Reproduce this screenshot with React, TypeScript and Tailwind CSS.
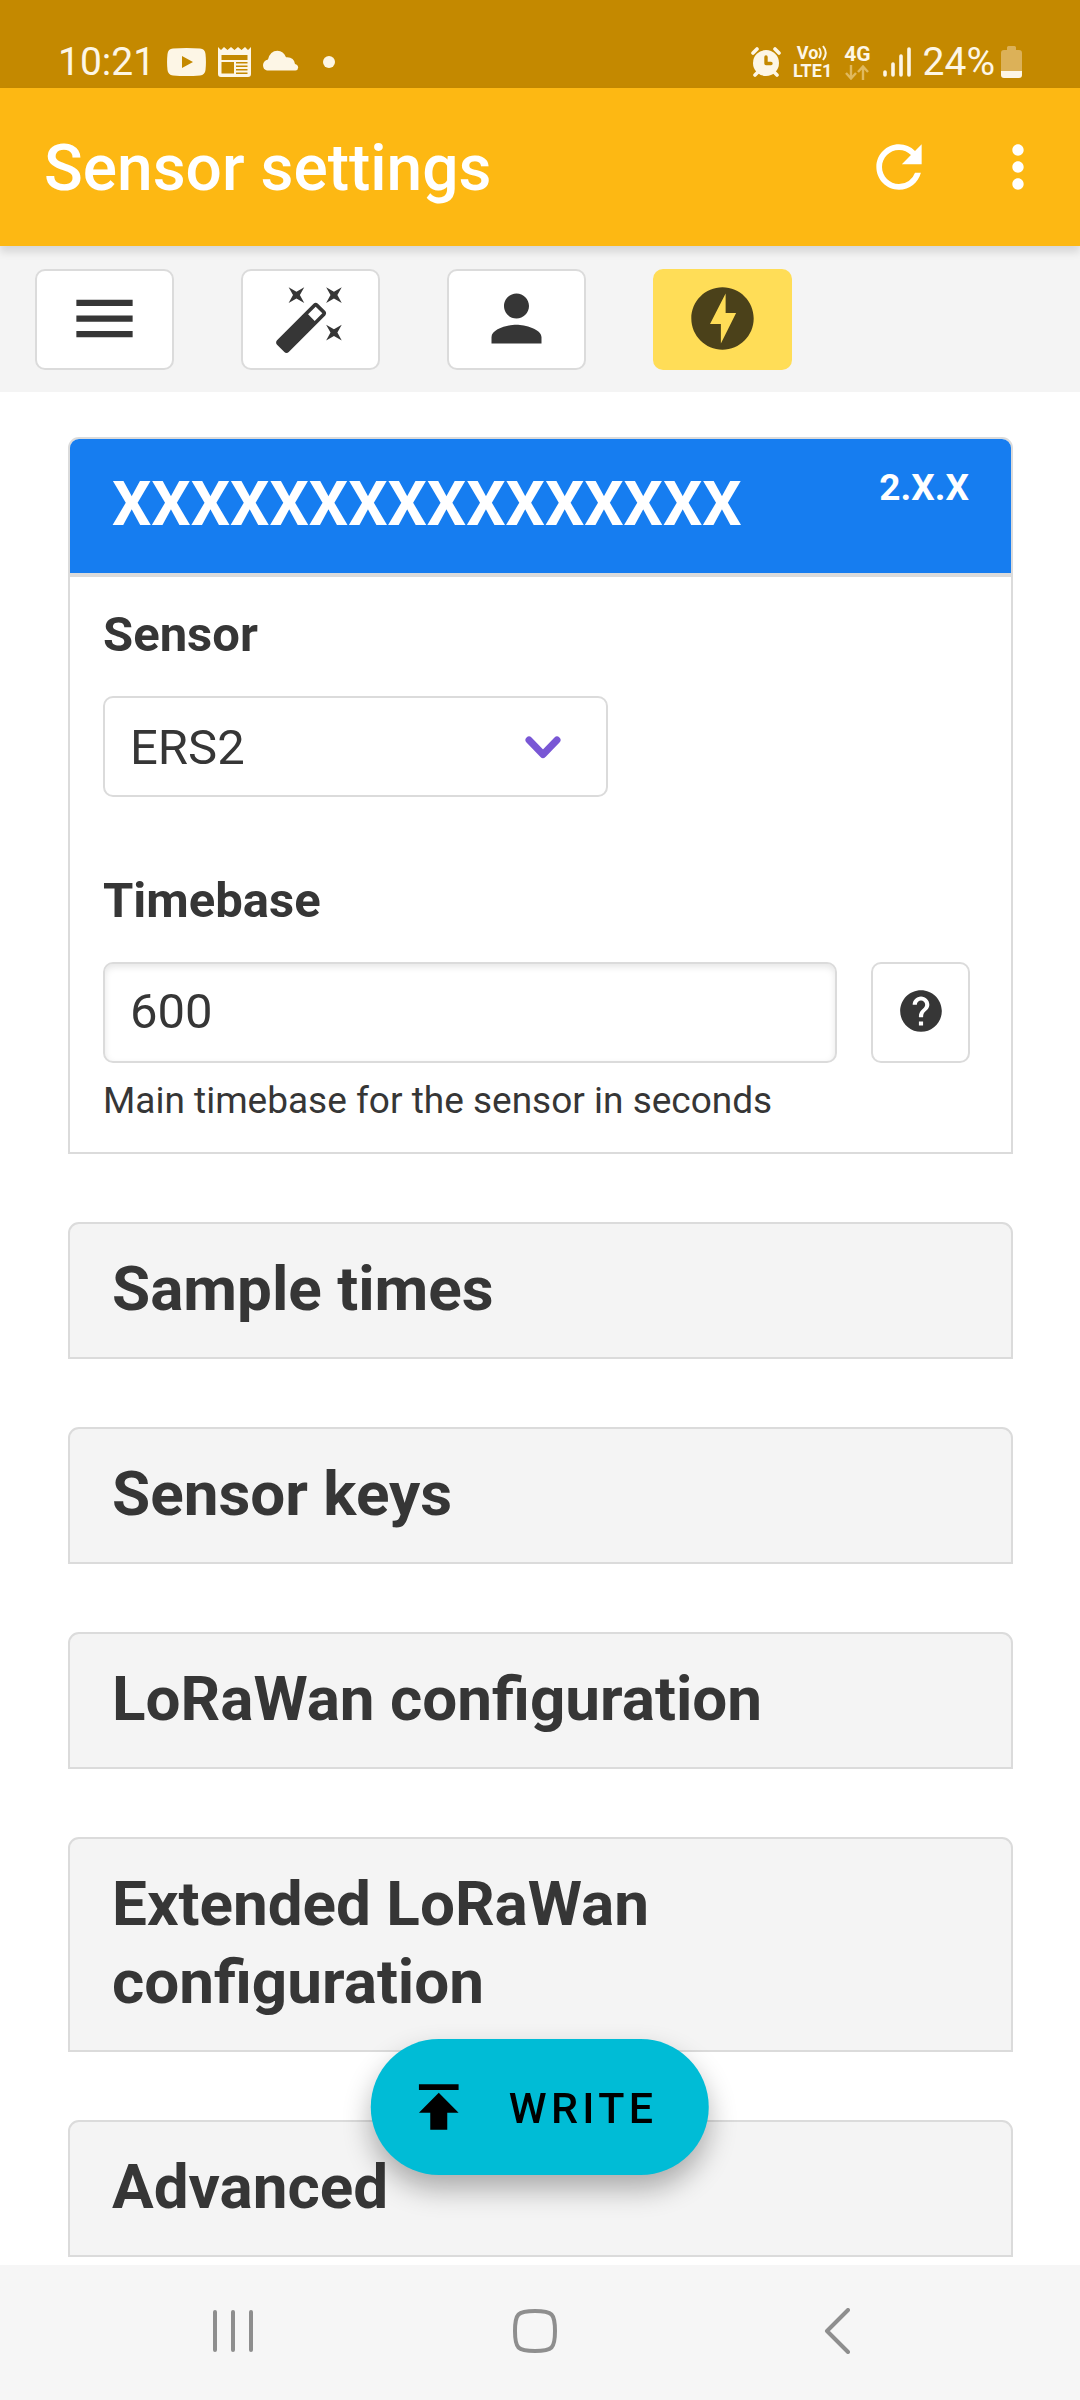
import { useState } from 'react';
import { MdHelp, MdMenu, MdMoreVert, MdOfflineBolt, MdPerson, MdPublish, MdRefresh } from 'react-icons/md';

const sections = [
  "Sample times",
  "Sensor keys",
  "LoRaWan configuration",
  "Extended LoRaWan configuration",
  "Advanced"
];

function WandIcon() {
  return (
    <svg viewBox="0 0 24 24" className="size-[75px]" fill="currentColor" aria-hidden="true">
      <path d="M7.5,5.6L5,7L6.4,4.5L5,2L7.5,3.4L10,2L8.6,4.5L10,7L7.5,5.6M19.5,15.4L22,14L20.6,16.5L22,19L19.5,17.6L17,19L18.4,16.5L17,14L19.5,15.4M22,2L20.6,4.5L22,7L19.5,5.6L17,7L18.4,4.5L17,2L19.5,3.4L22,2M13.34,12.78L15.78,10.34L13.66,8.22L11.22,10.66L13.34,12.78M14.37,7.29L16.71,9.63C17.1,10 17.1,10.65 16.71,11.04L5.04,22.71C4.65,23.1 4,23.1 3.63,22.71L1.29,20.37C0.9,20 0.9,19.35 1.29,18.96L12.96,7.29C13.35,6.9 14,6.9 14.37,7.29Z" />
    </svg>
  );
}

const tools = [
  { label: "Menu", icon: <MdMenu className="size-[75px]" />, active: false },
  { label: "Templates", icon: <WandIcon />, active: false },
  { label: "User", icon: <MdPerson className="size-[75px]" />, active: false },
  { label: "Quick write", icon: <MdOfflineBolt className="size-[75px]" />, active: true }
];

function StatusBar() {
  return (
    <div className="h-[88px] bg-[#c48900] text-[#fdf6e6] flex items-end justify-between px-[58px] pb-2">
      <div className="flex items-center">
        <span className="text-[39px] leading-[36px]">10:21</span>
        <svg viewBox="0 0 39 28" className="w-[39px] h-[28px] ml-3" aria-hidden="true">
          <path fill="currentColor" fillRule="evenodd" d="M6 .6Q19.5-.6 33 .6Q38 1 38.5 6Q39.4 14 38.5 22Q38 27 33 27.4Q19.5 28.6 6 27.4Q1 27 .5 22Q-.4 14 .5 6Q1 1 6 .6ZM15 8V20L26 14Z" />
        </svg>
        <svg viewBox="0 0 33 30" className="w-[33px] h-[30px] ml-3" aria-hidden="true">
          <path fill="currentColor" fillRule="evenodd" d="M0 0L3 3L6 0L9.5 3L13 0L16.5 3L20 0L23.5 3L27 0L30 3L33 0V27Q33 30 30 30H3Q0 30 0 27ZM3.5 8V13H29.5V8ZM3.5 15V26.5H16V15ZM18 15V16.5H29.5V15ZM18 18.5V20H29.5V18.5ZM18 22V23.5H29.5V22ZM18 25.5V27H29.5V25.5Z" />
        </svg>
        <svg viewBox="0 0 36 24" className="w-[36px] h-[24px] ml-3" aria-hidden="true">
          <path fill="currentColor" d="M4 20.5Q0 19.5 0 15Q.4 10.5 5 9.5Q7 1 14.5 .8Q20.5 1 23 7.2Q31 6.6 32 14Q35 14.6 35.2 17.5Q35 20.3 32.5 20.5Z" />
        </svg>
        <span className="size-3 rounded-full bg-current ml-6" />
      </div>
      <div className="flex items-center">
        <svg viewBox="0 0 30 30" className="size-[30px]" aria-hidden="true">
          <g stroke="currentColor" strokeWidth="3.6" strokeLinecap="round">
            <path d="M2 6L6 2M28 6L24 2M4 28L8 24M26 28L22 24" />
          </g>
          <circle cx="15" cy="16" r="13" fill="currentColor" />
          <path d="M15 10V16.5H20" fill="none" stroke="#c48900" strokeWidth="3.4" strokeLinecap="round" strokeLinejoin="round" />
        </svg>
        <div className="ml-3 flex flex-col items-center text-[18px] leading-[18px] font-bold">
          <span className="flex items-center">
            Vo
            <svg viewBox="0 0 10 16" className="w-[10px] h-[16px]" fill="none" stroke="currentColor" strokeWidth="2" aria-hidden="true">
              <path d="M1 3Q4.5 8 1 13M5 1Q10.5 8 5 15" />
            </svg>
          </span>
          <span>LTE1</span>
        </div>
        <div className="ml-3 flex flex-col items-center text-[21px] leading-[18px] font-bold">
          <span>4G</span>
          <svg viewBox="0 0 24 15" className="w-[24px] h-[15px] mt-[2px] text-[#e0b95e]" fill="none" stroke="currentColor" strokeWidth="2.4" aria-hidden="true">
            <path d="M6 0V13M1 8L6 13.5L11 8M18 15V2M13 7L18 1.5L23 7" />
          </svg>
        </div>
        <svg viewBox="0 0 28 30" className="w-[28px] h-[30px] ml-3" stroke="currentColor" strokeWidth="3.6" strokeLinecap="round" aria-hidden="true">
          <path d="M2 25V28M10 17V28M18 9V28M26 2V28" />
        </svg>
        <span className="ml-3 text-[39px] leading-[36px]">24%</span>
        <svg viewBox="0 0 21 32" className="w-[21px] h-[32px] ml-[6px]" aria-hidden="true">
          <path fill="#dcb158" d="M6 1.5Q6 0 7.5 0H13.5Q15 0 15 1.5V4H18Q21 4 21 7V25H0V7Q0 4 3 4H6Z" />
          <path fill="currentColor" d="M0 25H21V29Q21 32 18 32H3Q0 32 0 29Z" />
        </svg>
      </div>
    </div>
  );
}

export default function App() {
  const [sensor, setSensor] = useState("ERS2");
  const [timebase, setTimebase] = useState("600");

  return (
    <div className="min-h-screen flex flex-col bg-white text-[#363636] font-['Roboto',sans-serif]">
      <StatusBar />

      {/* App bar */}
      <header className="relative z-10 h-[158px] bg-[#fdb813] text-white flex items-center justify-between pl-11 pr-7 shadow-[0_6px_8px_rgba(0,0,0,0.12)]">
        <h1 className="text-[64px] leading-[70px] font-medium pt-1">Sensor settings</h1>
        <div className="flex items-center gap-[51px]">
          <button type="button" aria-label="Refresh">
            <MdRefresh className="size-[68px]" />
          </button>
          <button type="button" aria-label="More options">
            <MdMoreVert className="size-[68px]" />
          </button>
        </div>
      </header>

      {/* Toolbar */}
      <div className="bg-[#f4f4f4] flex gap-[67px] pl-[35px] pt-[23px] pb-[22px]">
        {tools.map((tool) => (
          <button
            key={tool.label}
            type="button"
            aria-label={tool.label}
            className={`w-[139px] h-[101px] rounded-[10px] border-2 flex items-center justify-center pb-[2px] ${tool.active ? 'bg-[#ffdd57] border-[#ffdd57] text-[#4b411a]' : 'bg-white border-[#dbdbdb]'}`}
          >
            {tool.icon}
          </button>
        ))}
      </div>

      <main className="grow flex flex-col gap-[68px] pl-[68px] pr-[67px] pt-[45px] pb-2">
        {/* Sensor card */}
        <section className="border-2 border-[#dbdbdb] rounded-t-[11px]">
          <div className="bg-[#167df0] text-white flex justify-between items-start px-[42px] pt-[26px] pb-[30px] rounded-t-[9px] font-bold">
            <h2 className="text-[62px] leading-[78px]">XXXXXXXXXXXXXXXX</h2>
            <span className="text-[37px] leading-[46px]">2.X.X</span>
          </div>
          <div className="border-t-4 border-[#dbdbdb] pl-[33px] pr-[41px] pt-5 pb-6">
            <label htmlFor="sensor" className="block text-[49px] leading-[75px] font-bold mb-6">Sensor</label>
            <div className="relative w-[505px] max-w-full">
              <select
                id="sensor"
                value={sensor}
                onChange={(e) => setSensor(e.target.value)}
                className="appearance-none w-full h-[101px] border-2 border-[#dbdbdb] rounded-[10px] bg-white pl-[25px] pr-20 pt-[2px] text-[49px]"
              >
                <option>ERS2</option>
              </select>
              <svg viewBox="0 0 36 24" className="absolute right-[47px] top-[39px] w-[36px] h-[24px] pointer-events-none" fill="none" stroke="#7957d5" strokeWidth="7" strokeLinecap="round" strokeLinejoin="round" aria-hidden="true">
                <path d="M4 5L18 19.5L32 5" />
              </svg>
            </div>

            <label htmlFor="timebase" className="block text-[49px] leading-[75px] font-bold mt-[66px] mb-6">Timebase</label>
            <div className="flex gap-[34px]">
              <input
                id="timebase"
                type="text"
                inputMode="numeric"
                value={timebase}
                onChange={(e) => setTimebase(e.target.value)}
                className="grow min-w-0 h-[101px] border-2 border-[#dbdbdb] rounded-[10px] px-[25px] pb-[2px] text-[49px] shadow-[inset_0_3px_7px_rgba(10,10,10,0.1)]"
              />
              <button type="button" aria-label="Help" className="w-[99px] h-[101px] shrink-0 border-2 border-[#dbdbdb] rounded-[10px] flex items-center justify-center pb-1">
                <MdHelp className="size-[50px]" />
              </button>
            </div>
            <p className="text-[37px] leading-[54px] mt-[11px]">Main timebase for the sensor in seconds</p>
          </div>
        </section>

        {sections.map((title) => (
          <section key={title} className="border-2 border-[#dbdbdb] rounded-t-[11px] bg-[#f4f4f4]">
            <h2 className="text-[62px] leading-[78px] font-bold">
              <button type="button" className="w-full text-left px-[42px] pt-[26px] pb-[29px]">{title}</button>
            </h2>
          </section>
        ))}
      </main>

      <button
        type="button"
        className="fixed z-20 bottom-[225px] left-1/2 -translate-x-1/2 h-[136px] rounded-full bg-[#00bcd6] text-black flex items-center gap-9 pl-[34px] pr-[52px] shadow-[0_14px_28px_rgba(0,0,0,0.3)]"
      >
        <MdPublish className="size-[68px]" />
        <span className="text-[43px] leading-[60px] font-medium tracking-widest pt-[2px]">WRITE</span>
      </button>

      {/* Android navigation */}
      <nav className="h-[135px] bg-[#f6f6f6] text-[#8e8e8e] grid grid-cols-3 pl-[82px] pr-[92px] pb-1">
        <button type="button" aria-label="Recent apps" className="flex items-center justify-center">
          <svg viewBox="0 0 40 44" className="w-[40px] h-[44px]" stroke="currentColor" strokeWidth="4" strokeLinecap="round">
            <path d="M2 3V41M20 3V41M38 3V41" />
          </svg>
        </button>
        <button type="button" aria-label="Home" className="flex items-center justify-center">
          <svg viewBox="0 0 44 44" className="size-11" fill="none" stroke="currentColor" strokeWidth="4">
            <path d="M22 2Q35 2 38.5 5.5Q42 9 42 22Q42 35 38.5 38.5Q35 42 22 42Q9 42 5.5 38.5Q2 35 2 22Q2 9 5.5 5.5Q9 2 22 2Z" />
          </svg>
        </button>
        <button type="button" aria-label="Back" className="flex items-center justify-center">
          <svg viewBox="0 0 26 46" className="w-[26px] h-[46px]" fill="none" stroke="currentColor" strokeWidth="4" strokeLinecap="round" strokeLinejoin="round">
            <path d="M24 2L3 23L24 44" />
          </svg>
        </button>
      </nav>
    </div>
  );
}
